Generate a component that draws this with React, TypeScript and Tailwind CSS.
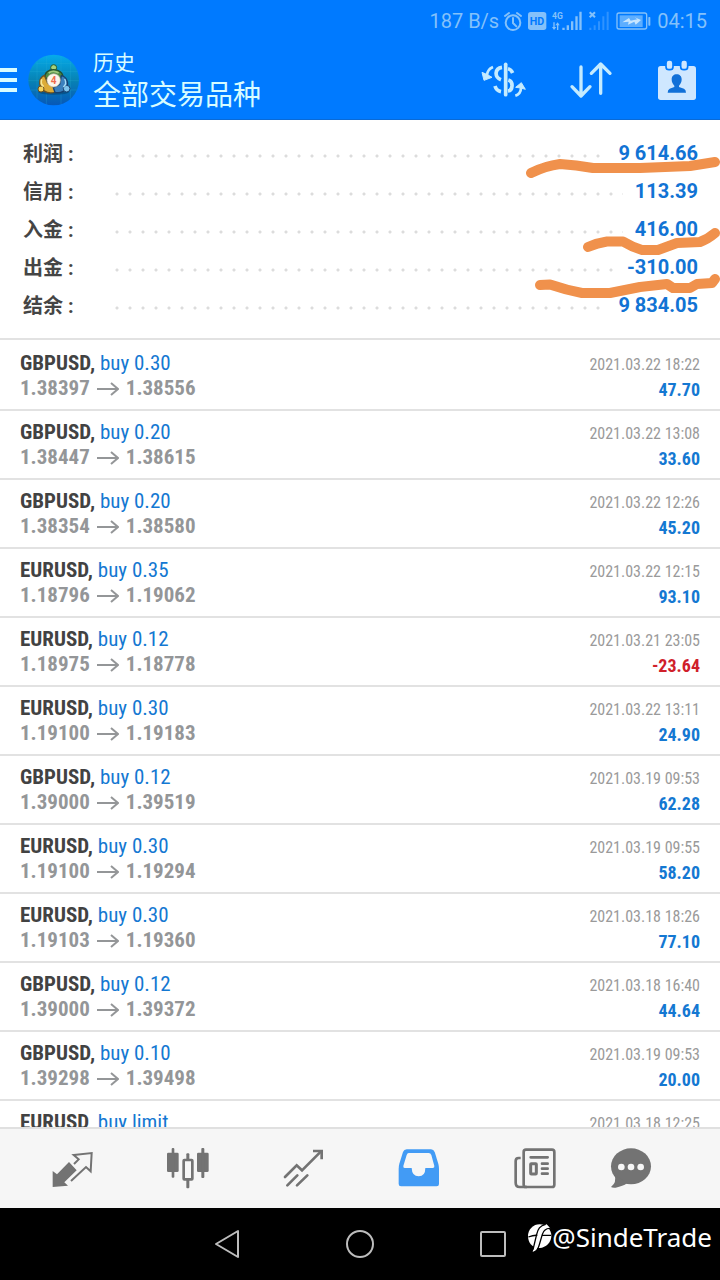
import React from "react";

type Trade = {
  symbol: string;
  action: string;
  open?: string;
  close?: string;
  time: string;
  profit: string;
};

const summary = [
  { label: "利润", value: "9 614.66" },
  { label: "信用", value: "113.39" },
  { label: "入金", value: "416.00" },
  { label: "出金", value: "-310.00" },
  { label: "结余", value: "9 834.05" },
];

const trades: Trade[] = [
  { symbol: "GBPUSD", action: "buy 0.30", open: "1.38397", close: "1.38556", time: "2021.03.22 18:22", profit: "47.70" },
  { symbol: "GBPUSD", action: "buy 0.20", open: "1.38447", close: "1.38615", time: "2021.03.22 13:08", profit: "33.60" },
  { symbol: "GBPUSD", action: "buy 0.20", open: "1.38354", close: "1.38580", time: "2021.03.22 12:26", profit: "45.20" },
  { symbol: "EURUSD", action: "buy 0.35", open: "1.18796", close: "1.19062", time: "2021.03.22 12:15", profit: "93.10" },
  { symbol: "EURUSD", action: "buy 0.12", open: "1.18975", close: "1.18778", time: "2021.03.21 23:05", profit: "-23.64" },
  { symbol: "EURUSD", action: "buy 0.30", open: "1.19100", close: "1.19183", time: "2021.03.22 13:11", profit: "24.90" },
  { symbol: "GBPUSD", action: "buy 0.12", open: "1.39000", close: "1.39519", time: "2021.03.19 09:53", profit: "62.28" },
  { symbol: "EURUSD", action: "buy 0.30", open: "1.19100", close: "1.19294", time: "2021.03.19 09:55", profit: "58.20" },
  { symbol: "EURUSD", action: "buy 0.30", open: "1.19103", close: "1.19360", time: "2021.03.18 18:26", profit: "77.10" },
  { symbol: "GBPUSD", action: "buy 0.12", open: "1.39000", close: "1.39372", time: "2021.03.18 16:40", profit: "44.64" },
  { symbol: "GBPUSD", action: "buy 0.10", open: "1.39298", close: "1.39498", time: "2021.03.19 09:53", profit: "20.00" },
  { symbol: "EURUSD", action: "buy limit", time: "2021.03.18 12:25", profit: "" },
];

function StatusBar() {
  return (
    <div className="flex h-10 items-center justify-end pr-[13px] pt-[2px] text-[20px] leading-6 text-[#84c1fa]">
      <span>187 B/s</span>
      <svg viewBox="250 30 60 63" className="ml-1 h-[21px] w-5" fill="none" stroke="currentColor" strokeWidth="6" strokeLinecap="round">
        <circle cx="280" cy="65" r="22" />
        <path d="M280 51v15l10 10M256 45l12-9M304 45l-12-9" />
      </svg>
      <svg viewBox="326 33 60 60" className="ml-1 h-5 w-5">
        <rect x="329" y="36" width="55" height="54" rx="8" fill="currentColor" />
        <text x="356" y="74" textAnchor="middle" fontSize="32" fontWeight="700" fill="#007aff">HD</text>
      </svg>
      <svg viewBox="399 27 99 66" className="ml-1 h-[22px] w-[33px]" fill="currentColor">
        <text x="402" y="54" fontSize="26" fontWeight="700">4G</text>
        <path d="M406 64h4v14h5l-7 9-6-9h4zM421 87h-4V73h-5l7-9 6 9h-4z" />
        <path d="M433 80h7v7h-7zM446 73h7v14h-7zM459 61h7v26h-7zM472 46h7v41h-7zM484 32h7v55h-7z" />
      </svg>
      <svg viewBox="507 27 66 66" className="ml-1 h-[22px] w-[22px]">
        <path d="M512 34l16 15M528 34l-16 15" stroke="currentColor" strokeWidth="6" />
        <path d="M511 80h6v7h-6zM524 73h6v14h-6zM537 61h6v26h-6zM550 46h6v41h-6zM563 32h6v55h-6z" fill="#2f93ff" />
      </svg>
      <svg viewBox="593 32 105 60" className="ml-[6px] h-5 w-[35px]">
        <rect x="596" y="38" width="89" height="48" rx="6" fill="none" stroke="currentColor" strokeWidth="4" />
        <rect x="604" y="45" width="69" height="35" fill="#5daeff" />
        <path d="M612 66l20-13 5 8 20-4-8-6 19 8-16 14-4-9-19 9 2-9z" fill="#c8e6ff" />
        <rect x="690" y="50" width="6" height="26" rx="2" fill="currentColor" />
      </svg>
      <span className="ml-[6px]">04:15</span>
    </div>
  );
}

function AppLogo() {
  return (
    <svg viewBox="85 157 156 162" className="h-[54px] w-[52px]">
      <defs>
        <linearGradient id="globe" x1="0" y1="0" x2="0" y2="1">
          <stop offset="0" stopColor="#05abeb" />
          <stop offset="0.5" stopColor="#0783b4" />
          <stop offset="1" stopColor="#0758b8" />
        </linearGradient>
      </defs>
      <circle cx="162" cy="238" r="76" fill="url(#globe)" />
      <path d="M112 182v112M140 165v146M184 165v146M212 182v112M90 212h144M86 240h152M92 268h140M110 188h104" stroke="#2bb4dc" strokeWidth="1.500" opacity="0.5" fill="none" />
      <ellipse cx="162" cy="274" rx="46" ry="8" fill="#064a7c" opacity="0.7" />
      <circle cx="162" cy="201" r="9" fill="#a6d27c" stroke="#275b2d" strokeWidth="3" />
      <path d="M136 232c-2-16 10-25 26-25s30 10 28 28l-14 2-28-2z" fill="#4c8a45" stroke="#234f2d" strokeWidth="4" />
      <path d="M147 217q14-10 30 0" stroke="#9fc97f" strokeWidth="5" fill="none" />
      <path d="M134 224c-14 6-18 22-10 36 8 16 28 20 42 14l-4-18-18-8z" fill="#dcab37" stroke="#6b5120" strokeWidth="4" />
      <circle cx="124" cy="265" r="9" fill="#f6d35c" stroke="#6b5120" strokeWidth="3" />
      <path d="M126 236q-5 14 6 22" stroke="#f7e693" strokeWidth="5" fill="none" />
      <path d="M185 225c18 4 23 24 14 38-6 10-18 15-33 12l-5-14 19-10z" fill="#3b80bd" stroke="#174070" strokeWidth="4" />
      <circle cx="201" cy="264" r="10" fill="#7ec4ed" stroke="#174070" strokeWidth="3" />
      <path d="M195 235q8 14-4 24" stroke="#a6dcf8" strokeWidth="4" fill="none" />
      <circle cx="162" cy="239" r="20" fill="#fbf6ec" stroke="#c0b9a4" strokeWidth="2" />
      <text x="162" y="250" textAnchor="middle" fontSize="30" fontWeight="700" fill="#ef6b4c">4</text>
    </svg>
  );
}

function Header() {
  return (
    <header className="bg-[#007aff] text-[#d8fcff]">
      <StatusBar />
      <div className="flex h-20 items-center border-b border-[#0a6ad6]">
        <button aria-label="菜单" className="flex h-12 w-[28px] items-center">
          <svg viewBox="0 0 17 24" className="h-6 w-[17px]" fill="currentColor">
            <path d="M0 0h17v4H0zM0 10h17v4H0zM0 20h17v4H0z" />
          </svg>
        </button>
        <AppLogo />
        <div className="ml-[13px] flex flex-1 flex-col pt-[3px]">
          <span className="text-[21px] leading-[30px]">历史</span>
          <h1 className="text-[28px] leading-9">全部交易品种</h1>
        </div>
        <div className="flex items-center gap-10 pr-5">
          <button aria-label="货币" className="flex h-12 w-12 items-center justify-center text-[#c4ebff]">
            <svg viewBox="182 177 144 120" className="h-10 w-12" fill="none" stroke="currentColor" strokeWidth="11">
              <path d="M259 190v91" strokeWidth="11" strokeLinecap="round" />
              <path d="M248 199c-22 3-24 29-3 37M266 203q9 2 14 13M267 237c16 5 14 31-1 33M227 255q4 14 18 17" />
              <path d="M221 198q-17 7-18 25M288 284q17-6 17-24" strokeWidth="8" />
              <path d="M188 214l6 24 24-9-14-8zM289 259l17-14 12 20-13-4z" fill="currentColor" strokeWidth="3" strokeLinejoin="round" />
            </svg>
          </button>
          <button aria-label="排序" className="flex h-12 w-[46px] items-center justify-center text-[#c4ebff]">
            <svg viewBox="446 177 132 120" className="h-10 w-11" fill="none" stroke="currentColor" strokeWidth="10" strokeLinecap="round" strokeLinejoin="round">
              <path d="M482 198v86M455 257l27 28 27-28M541 277v-86M513 217l28-28 28 28" />
            </svg>
          </button>
          <button aria-label="日期" className="flex h-12 w-[46px] items-center justify-center text-[#cfe7ff]">
            <svg viewBox="707 174 126 126" className="h-[42px] w-[42px]">
              <rect x="713" y="195" width="114" height="102" rx="8" fill="currentColor" />
              <rect x="737" y="177" width="21" height="29" rx="9" fill="currentColor" stroke="#007aff" strokeWidth="5" />
              <rect x="781" y="177" width="21" height="29" rx="9" fill="currentColor" stroke="#007aff" strokeWidth="5" />
              <path d="M769 220c9 0 15 6 15 15 0 8-3 14-8 19v4l15 5q6 3 6 12h-55q0-9 6-12l14-5v-4c-5-5-8-11-8-19 0-9 6-15 15-15z" fill="#1170d8" />
            </svg>
          </button>
        </div>
      </div>
    </header>
  );
}

function Summary() {
  return (
    <section className="relative border-b-2 border-[#e2e2e2] py-[14px] pl-[23px] pr-[22px]">
      <dl className="text-[20px] font-bold">
        {summary.map((row) => (
          <div key={row.label} className="flex h-[38px] items-center">
            <dt className="w-[92px] pt-[2px] text-[#454545]">{row.label} :</dt>
            <dd className="flex flex-1 items-center gap-3">
              <span className="mt-[5px] h-1 flex-1 bg-[radial-gradient(circle_at_2px_2px,#dcdcdc_1px,transparent_2px)] bg-[length:13px_4px]" />
              <span className="text-[#1173d4]">{row.value}</span>
            </dd>
          </div>
        ))}
      </dl>
      <svg
        viewBox="520 120 200 218"
        className="pointer-events-none absolute right-0 top-0 h-[218px] w-[200px]"
        fill="none"
        stroke="#f0914c"
        strokeWidth="10"
        strokeLinecap="round"
        strokeLinejoin="round"
      >
        <path d="M531 173Q545 166 560 164Q576 165 593 168L640 168L690 166L715 162" />
        <path d="M588 247Q597 243 607 241.500L623 241.500Q632 247 642 250L658 250L677 243L700 242Q708 239 715 233" />
        <path d="M540 285L550 284.500Q566 290 582 293L610 293L640 287L667 284L673 288L690 288L697 284L712 283L715 279" />
      </svg>
    </section>
  );
}

function TradeRow({ trade }: { trade: Trade }) {
  const loss = trade.profit.startsWith("-");
  return (
    <li className="flex h-[69px] justify-between border-b-2 border-[#e2e2e2] px-5 pt-[9px]">
      <div className="text-[21px] leading-[25px]">
        <p>
          <span className="font-bold text-[#424242]">{trade.symbol},</span>{" "}
          <span className="text-[#1478d2]">{trade.action}</span>
        </p>
        {trade.open && (
          <p className="flex items-center font-bold text-[#949698]">
            {trade.open}
            <svg viewBox="0 0 22 16" className="mx-[7px] h-4 w-[22px]" fill="none" stroke="currentColor" strokeWidth="2">
              <path d="M0 8h20M14 2l7 6-7 6" />
            </svg>
            {trade.close}
          </p>
        )}
      </div>
      <div className="pt-px text-right text-[18px] leading-[25px]">
        <p className="text-[16px] text-[#9a9a9a]">{trade.time}</p>
        <p className={loss ? "font-bold text-[#d0202a]" : "font-bold text-[#1478d2]"}>{trade.profit}</p>
      </div>
    </li>
  );
}

const tabClass = "flex flex-[3] items-center justify-center";

function TabBar() {
  return (
    <nav className="flex h-[81px] shrink-0 border-t-2 border-[#e0e0e0] bg-[#f6f6f6] pl-[14px] pr-[50px] text-[#737373]">
      <button aria-label="行情" className={tabClass}>
        <svg viewBox="147 165 132 132" className="h-11 w-11">
          <path d="M155 237l13 10 36-37 23 25-37 36 11 10-46 4z" fill="currentColor" />
          <path d="M219 216l14-14-15-13 54-6-3 55-14-13-45 42" fill="none" stroke="currentColor" strokeWidth="6" />
        </svg>
      </button>
      <button aria-label="图表" className={tabClass}>
        <svg viewBox="494 167 132 132" className="h-11 w-11" fill="currentColor">
          <rect x="497" y="184" width="35" height="58" rx="4" />
          <rect x="511" y="170" width="8" height="89" rx="3" />
          <rect x="587" y="184" width="35" height="58" rx="4" />
          <rect x="600" y="170" width="9" height="90" rx="3" />
          <rect x="555" y="186" width="9" height="105" rx="3" />
          <rect x="547" y="206" width="26" height="58" rx="2" fill="#f6f6f6" stroke="currentColor" strokeWidth="8" />
        </svg>
      </button>
      <button aria-label="交易" className={tabClass}>
        <svg viewBox="840 167 132 132" className="h-11 w-11" fill="none" stroke="currentColor" strokeWidth="8" strokeLinecap="round">
          <path d="M852 257l35-35 16 15 57-57M859 282l30-30M888 282l31-30" />
          <path d="M936 179h26v25" strokeWidth="8" strokeLinecap="butt" />
        </svg>
      </button>
      <button aria-label="历史" className={tabClass}>
        <svg viewBox="111 167 132 132" className="h-11 w-11">
          <path d="M140 174h73q8 0 11 8l11 35q2 8 2 15v46q0 7-7 7H123q-7 0-7-7v-46q0-7 2-15l11-35q3-8 11-8z" fill="#429bf5" />
          <path d="M146 185h60q6 0 8 6l9 33q1 6-5 6h-22q0 25-20 25t-21-25h-21q-5 0-4-6l10-33q2-6 6-6z" fill="#f6f6f6" />
        </svg>
      </button>
      <button aria-label="新闻" className={tabClass}>
        <svg viewBox="458 166 132 132" className="h-11 w-11" fill="none" stroke="currentColor" strokeWidth="8">
          <rect x="490" y="174" width="92" height="112" rx="7" />
          <path d="M481 199h-6q-9 0-9 9v65q0 13 12 13h22" />
          <path d="M511 197h51M545 216h17M545 231h17M545 246h17" strokeWidth="8" strokeLinecap="round" />
          <rect x="511" y="216" width="17" height="31" rx="2" strokeWidth="9" />
        </svg>
      </button>
      <button aria-label="消息" className="flex flex-[2] items-center justify-center">
        <svg viewBox="749 166 132 132" className="h-11 w-11" fill="currentColor">
          <ellipse cx="815" cy="224" rx="60" ry="54" />
          <path d="M766 250q7 22-11 36 4 3 14 2 22-4 34-13z" />
          <g fill="#f6f6f6">
            <circle cx="786" cy="226" r="10" />
            <circle cx="815" cy="226" r="10" />
            <circle cx="844" cy="226" r="10" />
          </g>
        </svg>
      </button>
    </nav>
  );
}

function SystemBar() {
  return (
    <footer className="relative flex h-[72px] shrink-0 items-center justify-center gap-[85px] bg-black text-[#bdbdbd]">
      <button aria-label="返回" className="flex h-12 w-12 items-center justify-center">
        <svg viewBox="0 0 28 30" className="h-[30px] w-7" fill="none" stroke="currentColor" strokeWidth="2" strokeLinejoin="round">
          <path d="M3 15L25 2v26z" />
        </svg>
      </button>
      <button aria-label="主页" className="flex h-12 w-12 items-center justify-center">
        <svg viewBox="0 0 30 30" className="h-[30px] w-[30px]" fill="none" stroke="currentColor" strokeWidth="2">
          <circle cx="15" cy="15" r="13" />
        </svg>
      </button>
      <button aria-label="最近任务" className="flex h-12 w-12 items-center justify-center">
        <svg viewBox="0 0 28 28" className="h-7 w-7" fill="none" stroke="currentColor" strokeWidth="2">
          <rect x="2" y="2" width="24" height="24" rx="1" />
        </svg>
      </button>
      <div className="absolute right-2 top-[12px] flex items-center font-['Noto_Sans','Open_Sans',sans-serif] text-[26px] leading-8 text-white">
        <svg viewBox="494 400 75 90" className="mt-[3px] h-[30px] w-[25px]">
          <path d="M532 404a35 35 0 0 1 35 35c0 19-16 35-35 36l-8 0c-16-3-27-18-27-36a35 35 0 0 1 35-35z" fill="#fff" />
          <path d="M553 404c-19 3-24 14-29 31l-13 52c12-4 16-12 19-23l12-36c4-10 9-12 22-12" fill="#fff" />
          <path d="M550 404c-18 4-23 14-27 30l-11 46" stroke="#000" strokeWidth="4" fill="none" />
          <path d="M564 416c-14-1-20 5-24 18l-9 31q-2 8-6 14" stroke="#000" strokeWidth="4" fill="none" />
          <path d="M498 442q16-6 27-5M539 437l27 0" stroke="#000" strokeWidth="4" fill="none" />
        </svg>
        <span>@SindeTrade</span>
      </div>
    </footer>
  );
}

export default function App() {
  return (
    <div className="flex h-screen flex-col bg-white font-['Roboto','Noto_Sans_CJK_SC',sans-serif]">
      <Header />
      <Summary />
      <main className="min-h-0 flex-1 overflow-hidden bg-white pt-[2px] font-['Roboto_Condensed','Liberation_Sans_Narrow','Roboto',sans-serif]">
        <ul>
          {trades.map((trade, i) => (
            <TradeRow key={i} trade={trade} />
          ))}
        </ul>
      </main>
      <TabBar />
      <SystemBar />
    </div>
  );
}
